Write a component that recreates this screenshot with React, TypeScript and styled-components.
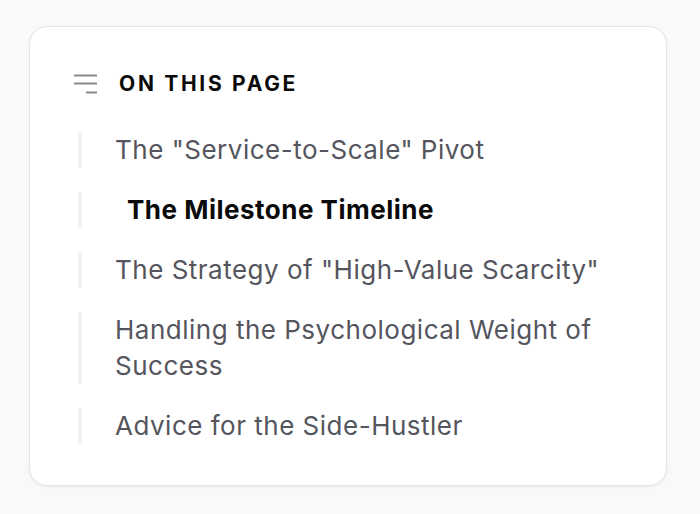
import React from "react";
import styled, { createGlobalStyle } from "styled-components";

const Global = createGlobalStyle`
  html, body { margin: 0; padding: 0; background: #f9f9f9; }
  body { font-family: Inter, "Noto Sans", sans-serif; -webkit-font-smoothing: antialiased; }
`;

const Page = styled.div`
  padding: 26px 33px 29px 29px;
`;

const Card = styled.nav`
  background: #ffffff;
  border: 1px solid #e4e4e4;
  border-radius: 18px;
  box-shadow: 0 1px 3px rgba(0, 0, 0, 0.06);
  padding: 44px 40px 41px 44px;
`;

const Header = styled.div`
  display: flex;
  align-items: center;
  gap: 21px;
  height: 26px;
  margin-bottom: 35px;
`;

const Title = styled.h2`
  margin: 0;
  font-size: 21px;
  font-weight: 700;
  letter-spacing: 2.7px;
  color: #0a0a0a;
  line-height: 26px;
`;

const List = styled.ul`
  list-style: none;
  margin: 0;
  padding: 0 0 0 4px;
  display: flex;
  flex-direction: column;
  gap: 24px;
`;

const Item = styled.li<{ $active?: boolean }>`
  border-left: 4px solid #f1f1f1;
  padding-left: ${(p) => (p.$active ? 45 : 33)}px;
  font-size: 26px;
  line-height: 36px;
  letter-spacing: 0.5px;
  font-weight: ${(p) => (p.$active ? 700 : 400)};
  color: ${(p) => (p.$active ? "#0a0a0a" : "#55555e")};
`;

const MenuIcon = () => (
  <svg width="24" height="24" viewBox="0 0 24 24" fill="none" stroke="#8a8a8a" strokeWidth="2">
    <line x1="0" y1="3.5" x2="23" y2="3.5" />
    <line x1="0" y1="11.5" x2="23" y2="11.5" />
    <line x1="12" y1="20.5" x2="23" y2="20.5" />
  </svg>
);

const items = [
  { label: 'The "Service-to-Scale" Pivot' },
  { label: "The Milestone Timeline", active: true },
  { label: 'The Strategy of "High-Value Scarcity"' },
  { label: "Handling the Psychological Weight of Success" },
  { label: "Advice for the Side-Hustler" },
];

export default function App() {
  return (
    <Page>
      <Global />
      <Card>
        <Header>
          <MenuIcon />
          <Title>ON THIS PAGE</Title>
        </Header>
        <List>
          {items.map((it) => (
            <Item key={it.label} $active={it.active}>
              {it.label}
            </Item>
          ))}
        </List>
      </Card>
    </Page>
  );
}
